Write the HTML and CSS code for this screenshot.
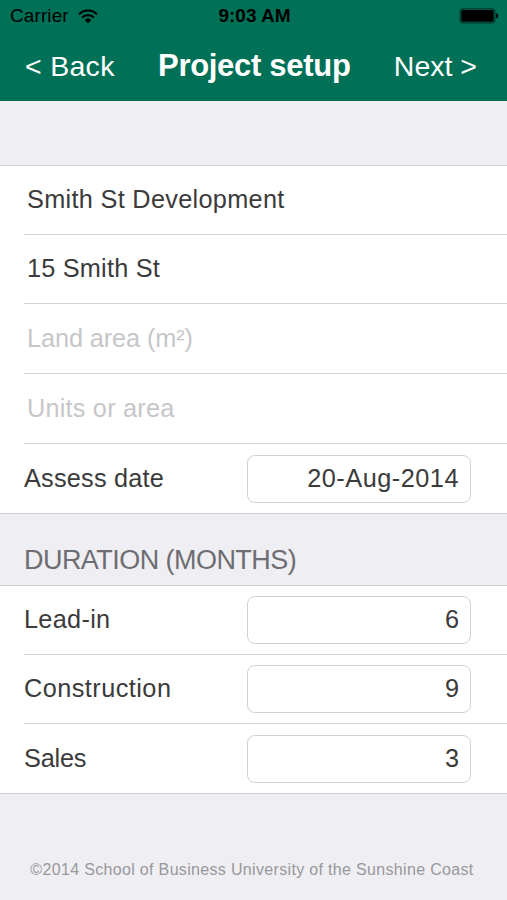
FILE: index.html
```html
<!DOCTYPE html>
<html lang="en">
<head>
<meta charset="utf-8">
<title>Project setup</title>
<link rel="stylesheet" href="styles.css">
</head>
<body>
<header class="header">
  <div class="status">
    <div class="carrier"><span>Carrier</span>
      <svg class="wifi" width="20" height="15" viewBox="0 0 20 15"><g fill="none" stroke="#000" stroke-width="2.1"><path d="M1 5.3C6 .3 14 .3 19 5.3"/><path d="M4.1 8.6C7.4 5.3 12.6 5.3 15.9 8.6"/></g><path d="M6.6 11C8.5 9.1 11.5 9.1 13.4 11L10 14.3Z"/></svg>
    </div>
    <span class="clock">9:03 AM</span>
    <svg class="battery" width="40" height="16" viewBox="0 0 40 16"><rect x="1" y=".8" width="35" height="14.2" rx="2.8" fill="none" stroke="#000" stroke-opacity=".6"/><rect x="2.3" y="2" width="32.4" height="11.8" rx="1.4"/><path d="M37 5.2Q39.2 5.6 39.2 7.8T37 10.4Z"/></svg>
  </div>
  <nav class="nav">
    <a class="back">&lt; Back</a>
    <h1 class="title">Project setup</h1>
    <a class="next">Next &gt;</a>
  </nav>
</header>
<main>
  <section class="group details">
    <div class="row"><span class="value name">Smith St Development</span></div>
    <div class="row"><span class="value">15 Smith St</span></div>
    <div class="row"><span class="value hint area">Land area (m²)</span></div>
    <div class="row"><span class="value hint">Units or area</span></div>
    <div class="row"><span class="label">Assess date</span><div class="field date"><span>20-Aug-2014</span></div></div>
  </section>
  <h2 class="section-title"><span>DURATION (MONTHS)</span></h2>
  <section class="group durations">
    <div class="row"><span class="label lead-in">Lead-in</span><div class="field">6</div></div>
    <div class="row"><span class="label construction">Construction</span><div class="field">9</div></div>
    <div class="row"><span class="label sales">Sales</span><div class="field">3</div></div>
  </section>
</main>
<footer class="footer"><span>©2014 School of Business University of the Sunshine Coast</span></footer>
</body>
</html>
```
FILE: styles.css
```css
* { box-sizing: border-box; }
body {
  margin: 0;
  height: 900px;
  overflow: hidden;
  display: flex;
  flex-direction: column;
  background: #efeef3;
  color: #3b3b3b;
  font: 25.3px/30px "Liberation Sans", Arial, sans-serif;
  white-space: nowrap;
}
.header { height: 101px; background: #007057; }
.status {
  height: 32px;
  display: grid;
  grid-template-columns: 1fr auto 1fr;
  align-items: center;
  padding: 0 8px 0 10px;
  color: #000;
  font-size: 19px;
}
.carrier { display: flex; align-items: center; gap: 9px; letter-spacing: .1px; }
.clock { font-weight: bold; }
.battery { justify-self: end; }
.nav {
  height: 69px;
  padding: 0 30px 2px 25px;
  display: flex;
  justify-content: space-between;
  align-items: center;
  color: #fff;
  font-size: 28.5px;
}
.back { letter-spacing: .3px; }
.title { margin: 0; font-size: 31px; font-weight: bold; letter-spacing: -.3px; }
.group {
  display: grid;
  padding-left: 24px;
  background: #fff;
  border-top: 1px solid #d0cfd4;
  border-bottom: 1px solid #d0cfd4;
}
.details { margin-top: 64px; grid-template-rows: 68px 69px 70px 70px 70px; }
.durations { grid-template-rows: 68px 69px 70px; }
.row { display: flex; align-items: center; justify-content: space-between; padding-right: 36px; }
.row + .row { border-top: 1px solid #d4d4d6; }
.value { padding: 0 0 2px 3px; letter-spacing: .2px; }
.name { letter-spacing: .3px; }
.hint { color: #c6c6c9; }
.area { letter-spacing: -.1px; }
.label { padding-bottom: 2px; letter-spacing: .2px; }
.lead-in { letter-spacing: .3px; }
.construction { letter-spacing: .45px; }
.sales { letter-spacing: -.2px; }
.field {
  width: 224px;
  height: 48px;
  padding: 0 11px;
  border: 1px solid #d2d2d2;
  border-radius: 8px;
  text-align: right;
  line-height: 45px;
}
.date { letter-spacing: .5px; }
.section-title {
  margin: 0;
  height: 71px;
  padding: 31px 24px 0;
  font-size: 27px;
  font-weight: normal;
  letter-spacing: -.55px;
  color: #6d6d72;
}
.footer {
  margin-top: auto;
  height: 60px;
  padding-right: 3px;
  text-align: center;
  font-size: 16px;
  line-height: 60px;
  color: #98989b;
  letter-spacing: .33px;
}
```
